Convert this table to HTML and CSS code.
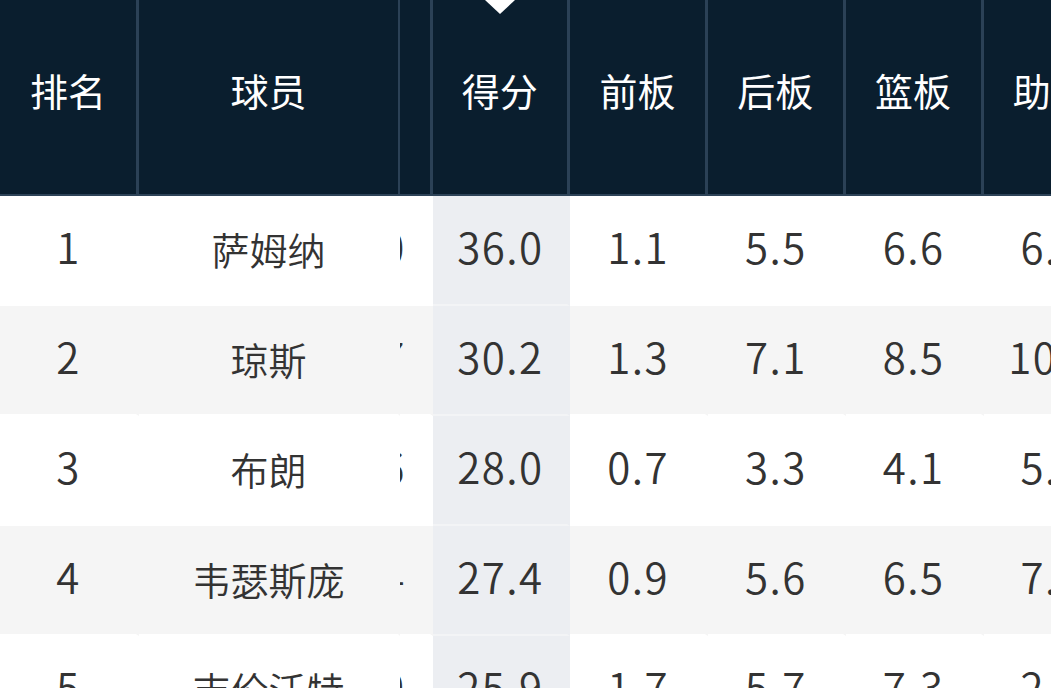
FILE: index.html
```html
<!DOCTYPE html>
<html lang="zh-CN">
<head>
<meta charset="utf-8">
<title>球员数据排行</title>
<link rel="stylesheet" href="styles.css">
</head>
<body>
<div class="board">
  <div class="row head">
    <div class="cell rank">排名</div>
    <div class="cell name">球员</div>
    <div class="window">
      <div class="track">
        <div class="cell stat">时间</div>
        <div class="cell stat sorted">得分</div>
        <div class="cell stat">前板</div>
        <div class="cell stat">后板</div>
        <div class="cell stat">篮板</div>
        <div class="cell stat">助攻</div>
      </div>
    </div>
  </div>

  <div class="row body">
    <div class="cell rank num">1</div>
    <div class="cell name">萨姆纳</div>
    <div class="window">
      <div class="track">
        <div class="cell stat num">38.0</div>
        <div class="cell stat num sorted">36.0</div>
        <div class="cell stat num">1.1</div>
        <div class="cell stat num">5.5</div>
        <div class="cell stat num">6.6</div>
        <div class="cell stat num">6.8</div>
      </div>
    </div>
  </div>

  <div class="row body alt">
    <div class="cell rank num">2</div>
    <div class="cell name">琼斯</div>
    <div class="window">
      <div class="track">
        <div class="cell stat num">36.7</div>
        <div class="cell stat num sorted">30.2</div>
        <div class="cell stat num">1.3</div>
        <div class="cell stat num">7.1</div>
        <div class="cell stat num">8.5</div>
        <div class="cell stat num">10.2</div>
      </div>
    </div>
  </div>

  <div class="row body">
    <div class="cell rank num">3</div>
    <div class="cell name">布朗</div>
    <div class="window">
      <div class="track">
        <div class="cell stat num">34.6</div>
        <div class="cell stat num sorted">28.0</div>
        <div class="cell stat num">0.7</div>
        <div class="cell stat num">3.3</div>
        <div class="cell stat num">4.1</div>
        <div class="cell stat num">5.3</div>
      </div>
    </div>
  </div>

  <div class="row body alt">
    <div class="cell rank num">4</div>
    <div class="cell name">韦瑟斯庞</div>
    <div class="window">
      <div class="track">
        <div class="cell stat num">35.4</div>
        <div class="cell stat num sorted">27.4</div>
        <div class="cell stat num">0.9</div>
        <div class="cell stat num">5.6</div>
        <div class="cell stat num">6.5</div>
        <div class="cell stat num">7.1</div>
      </div>
    </div>
  </div>

  <div class="row body">
    <div class="cell rank num">5</div>
    <div class="cell name">吉伦沃特</div>
    <div class="window">
      <div class="track">
        <div class="cell stat num">32.9</div>
        <div class="cell stat num sorted">25.9</div>
        <div class="cell stat num">1.7</div>
        <div class="cell stat num">5.7</div>
        <div class="cell stat num">7.3</div>
        <div class="cell stat num">2.9</div>
      </div>
    </div>
  </div>
</div>
</body>
</html>
```

FILE: styles.css
```css
html, body {
  margin: 0;
  padding: 0;
  background: #ffffff;
}

body {
  width: 1051px;
  height: 688px;
  overflow: hidden;
  font-family: "Noto Sans CJK SC", "Noto Sans", sans-serif;
  font-weight: 350;
}

.board {
  display: flex;
  flex-direction: column;
}

.row {
  display: flex;
  flex-shrink: 0;
}

.window {
  flex: 1;
  min-width: 0;
  overflow: hidden;
}

/* horizontal scroll offset of the scrolling columns */
.track {
  display: flex;
  margin-left: -105.25px;
  height: 100%;
}

.cell {
  display: flex;
  align-items: center;
  justify-content: center;
  flex-shrink: 0;
  box-sizing: border-box;
  white-space: nowrap;
  font-size: 38px;
}

.rank {
  width: 139px;
  border-right: 3px solid transparent;
}

.name {
  width: 261px;
  border-right: 2px solid transparent;
}

.stat {
  width: 137.75px;
  border-right: 3px solid transparent;
}

/* header */
.head {
  height: 196px;
  background: #0a1e2e;
  border-bottom: 2px solid #2d4358;
  box-sizing: border-box;
}

.head .cell {
  color: #ffffff;
  height: 194px;
  padding-bottom: 16px;
  border-right-color: #2b4156;
  font-weight: 400;
}

.head .sorted {
  position: relative;
}

.head .sorted::before {
  content: "";
  position: absolute;
  top: 0;
  left: 50%;
  margin-left: -15px;
  width: 0;
  height: 0;
  border-left: 15px solid transparent;
  border-right: 15px solid transparent;
  border-top: 14px solid #ffffff;
}

/* body rows */
.body {
  height: 110px;
  background: #ffffff;
}

.body.alt {
  background: #f5f5f5;
}

.body .cell {
  height: 110px;
  color: #333333;
  border-bottom: 2px solid #ffffff;
  font-size: 38px;
  padding-bottom: 4px;
}

.body .num {
  font-size: 42px;
  letter-spacing: 1.5px;
  padding-bottom: 9px;
  padding-left: 1px;
}

.body .sorted {
  background: #eceef2;
  border-bottom-color: #f3f4f6;
}
```
